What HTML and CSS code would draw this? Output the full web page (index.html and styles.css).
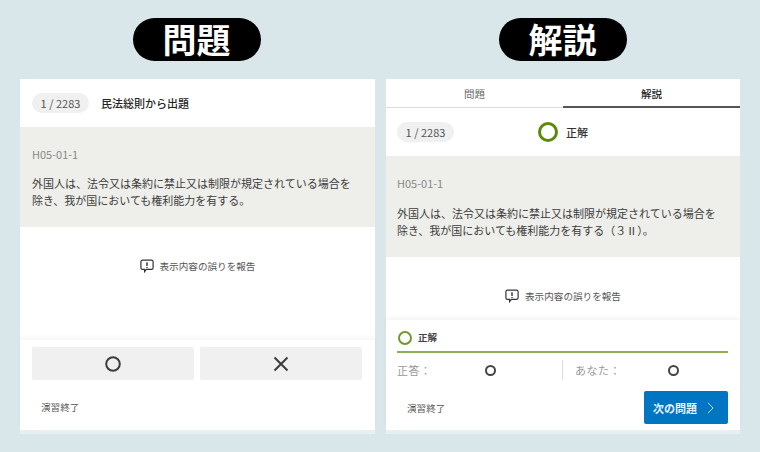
FILE: index.html
```html
<!DOCTYPE html>
<html lang="ja">
<head>
<meta charset="utf-8">
<title>問題と解説</title>
<link rel="stylesheet" href="styles.css">
</head>
<body>
<main class="page">
  <section class="col col-left">
    <h2 class="title">問題</h2>
    <div class="panel">
      <div class="head">
        <span class="count">1 / 2283</span>
        <span class="subject">民法総則から出題</span>
      </div>
      <div class="question">
        <p class="code">H05-01-1</p>
        <p class="text">外国人は、法令又は条約に禁止又は制限が規定されている場合を<br>除き、我が国においても権利能力を有する。</p>
      </div>
      <div class="report report-left">
        <svg class="report-icon" viewBox="0 0 14 14"><path d="M2.5 1.2h9a1.6 1.6 0 0 1 1.6 1.6v6a1.6 1.6 0 0 1-1.6 1.6H6.4L4.6 12.6v-2.2H2.5A1.6 1.6 0 0 1 .9 8.8v-6a1.6 1.6 0 0 1 1.6-1.6z"/><path class="mark" d="M7 3.2v3.7M7 7.9v1.1"/></svg>
        <span>表示内容の誤りを報告</span>
      </div>
      <div class="foot foot-left">
        <div class="answers">
          <button class="answer"><svg viewBox="0 0 18 18"><circle cx="9" cy="9" r="6.8"/></svg></button>
          <button class="answer"><svg viewBox="0 0 18 18"><path d="M2.5 2.5l13 13M15.5 2.5l-13 13"/></svg></button>
        </div>
        <div class="end-row"><span class="end">演習終了</span></div>
      </div>
    </div>
  </section>
  <section class="col col-right">
    <h2 class="title">解説</h2>
    <div class="panel">
      <div class="tabs">
        <span class="tab">問題</span>
        <span class="tab tab-on">解説</span>
      </div>
      <div class="head head-right">
        <span class="count">1 / 2283</span>
        <span class="verdict"><i class="ring"></i>正解</span>
      </div>
      <div class="question">
        <p class="code">H05-01-1</p>
        <p class="text">外国人は、法令又は条約に禁止又は制限が規定されている場合を<br>除き、我が国においても権利能力を有する（３Ⅱ）。</p>
      </div>
      <div class="report report-right">
        <svg class="report-icon" viewBox="0 0 14 14"><path d="M2.5 1.2h9a1.6 1.6 0 0 1 1.6 1.6v6a1.6 1.6 0 0 1-1.6 1.6H6.4L4.6 12.6v-2.2H2.5A1.6 1.6 0 0 1 .9 8.8v-6a1.6 1.6 0 0 1 1.6-1.6z"/><path class="mark" d="M7 3.2v3.7M7 7.9v1.1"/></svg>
        <span>表示内容の誤りを報告</span>
      </div>
      <div class="foot foot-right">
        <div class="result"><i class="ring ring-small"></i>正解</div>
        <div class="compare">
          <div class="cell"><span class="label">正答：</span><i class="dot"></i></div>
          <div class="cell cell-b"><span class="label">あなた：</span><i class="dot"></i></div>
        </div>
        <div class="end-row end-row-right">
          <span class="end">演習終了</span>
          <button class="next">次の問題<svg viewBox="0 0 8 14"><path d="M1 1l6 6-6 6"/></svg></button>
        </div>
      </div>
    </div>
  </section>
</main>
</body>
</html>
```
FILE: styles.css
```css
* { box-sizing: border-box; }
html, body { margin: 0; height: 100%; }
body {
  background: #d9e7eb;
  font-family: "Noto Sans CJK JP", "Noto Sans", sans-serif;
  color: #333;
  overflow: hidden;
}
.page {
  display: flex;
  gap: 11px;
  padding: 18px 0 0 20px;
}
.col {
  width: 355px;
  display: flex;
  flex-direction: column;
  align-items: center;
}
.col-right { width: 354px; }
.title {
  margin: 0 0 18px;
  width: 128px;
  height: 43px;
  padding-right: 1px;
  border-radius: 22px;
  background: #000;
  color: #fff;
  font-size: 34px;
  font-weight: 700;
  line-height: 42px;
  text-align: center;
}
.col-left .title { margin-right: 1px; }
.panel {
  width: 100%;
  height: 355px;
  background: #fff;
  border-bottom: 4px solid #e6f0f2;
  display: flex;
  flex-direction: column;
}
.tabs {
  height: 29px;
  flex: none;
  display: flex;
  border-bottom: 1px solid #ddd;
}
.tab {
  flex: 1;
  margin-bottom: -1px;
  font-size: 10.5px;
  line-height: 29px;
  text-align: center;
  color: #666;
}
.tab-on {
  border-bottom: 2px solid #555;
  color: #222;
  font-weight: 500;
}
.head {
  height: 48px;
  flex: none;
  display: flex;
  align-items: center;
  padding-left: 12px;
}
.head-right { padding-left: 11px; }
.count {
  width: 57px;
  height: 20px;
  flex: none;
  border-radius: 10px;
  background: #f0f0f0;
  color: #555;
  font-size: 11px;
  line-height: 20px;
  text-align: center;
}
.subject {
  margin-left: 12px;
  font-size: 11px;
  font-weight: 500;
  color: #222;
}
.question {
  height: 100px;
  flex: none;
  background: #eeefeb;
  padding: 19px 12px 0;
}
.col-right .question { padding-left: 11px; height: 101px; }
.code {
  margin: 0 0 12px;
  font-size: 11px;
  line-height: 17px;
  color: #888;
}
.col-right .code { margin-bottom: 13px; }
.text {
  margin: 0;
  font-size: 11px;
  line-height: 17px;
  color: #3c3c3c;
  white-space: nowrap;
}
.report {
  flex: none;
  display: flex;
  justify-content: center;
  align-items: flex-start;
  gap: 6px;
  padding-top: 32px;
  font-size: 9.6px;
  line-height: 14px;
  color: #555;
}
.report-left { height: 113px; }
.report-right { height: 63px; }
.report-icon {
  width: 14px;
  height: 14px;
  fill: none;
  stroke: #333;
  stroke-width: 1.2;
}
.report-icon .mark { stroke-width: 1.4; }
.foot {
  flex: 1;
  box-shadow: 0 -3px 4px rgba(0, 0, 0, 0.035);
}
.foot-left { padding: 7px 13px 0 12px; }
.answers {
  display: flex;
  gap: 6px;
}
.answer {
  flex: 1;
  height: 33px;
  padding: 0;
  border: 0;
  border-radius: 2px;
  background: #f0f0f0;
  display: flex;
  align-items: center;
  justify-content: center;
}
.answer svg {
  width: 18px;
  height: 18px;
  fill: none;
  stroke: #3c3c3c;
  stroke-width: 2;
}
.end-row {
  height: 46px;
  padding: 12px 0 0 9px;
}
.end {
  font-size: 9.6px;
  line-height: 28px;
  color: #555;
}
.foot-right { padding: 7px 12px 0 11px; }
.result {
  height: 26px;
  border-bottom: 2px solid #8ab04f;
  display: flex;
  align-items: flex-start;
  gap: 6px;
  font-size: 9.5px;
  font-weight: 700;
  line-height: 21px;
  color: #444;
}
.ring {
  display: block;
  width: 20px;
  height: 20px;
  border: 3px solid #5a8a0a;
  border-radius: 50%;
}
.verdict {
  margin-left: 84px;
  display: flex;
  align-items: center;
  gap: 8px;
  font-size: 11px;
  font-weight: 500;
  color: #333;
}
.ring.ring-small {
  width: 14px;
  height: 14px;
  border-width: 2px;
  border-color: #6f9a2a;
  margin-top: 4px;
  margin-left: 1px;
}
.compare {
  display: flex;
  margin-top: 7px;
  height: 20px;
}
.cell {
  width: 165px;
  display: flex;
  align-items: center;
  font-size: 11px;
  color: #999;
  letter-spacing: 0.5px;
}
.cell-b {
  flex: 1;
  border-left: 1px solid #ddd;
  padding-left: 12px;
}
.label { width: 88px; }
.cell-b .label { width: 93px; }
.dot {
  display: block;
  width: 11px;
  height: 11px;
  border: 2px solid #444;
  border-radius: 50%;
}
.end-row-right {
  display: flex;
  justify-content: space-between;
  align-items: flex-start;
  padding: 11px 0 0 10px;
  height: 44px;
}
.end-row-right .end { line-height: 34px; }
.next {
  width: 84px;
  height: 33px;
  padding: 0 5px 0 0;
  border: 0;
  border-radius: 2px;
  background: #0075c2;
  color: #e8f3fa;
  font-family: inherit;
  font-size: 11px;
  font-weight: 700;
  display: flex;
  align-items: center;
  justify-content: center;
  gap: 10px;
}
.next svg {
  width: 7px;
  height: 12px;
  fill: none;
  stroke: #cfe4f3;
  stroke-width: 1.1;
}
```
